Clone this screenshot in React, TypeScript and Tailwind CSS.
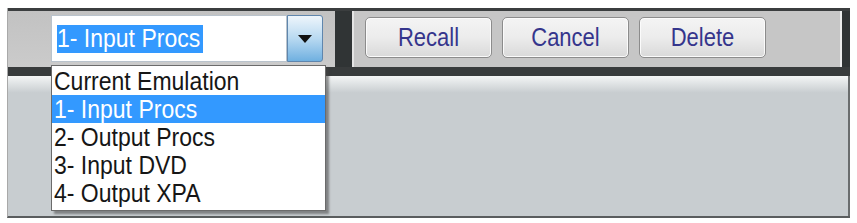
import React from 'react'

const font = { fontFamily: '"Liberation Sans", Arial, sans-serif' }

const items = ['Current Emulation', '1- Input Procs', '2- Output Procs', '3- Input DVD', '4- Output XPA']

const Txt = ({ children }: { children: React.ReactNode }) => (
  <span className="inline-block scale-y-[1.14] origin-center">{children}</span>
)

const ActionButton = ({ label }: { label: string }) => (
  <div className="w-[127px] h-[41px] rounded-[5px] border border-[#8c8c8c] bg-gradient-to-b from-[#f4f4f4] via-[#ececec] to-[#d9d9d9] shadow-[inset_0_0_0_1px_#fbfbfb] flex items-center justify-center text-[22px] text-[#35358c]">
    <Txt>{label}</Txt>
  </div>
)

export default function App() {
  return (
    <div className="w-[857px] h-[223px] bg-white overflow-hidden pt-[8px] pl-[7px]" style={font}>
      <div className="relative w-[843px] h-[210px] flex flex-col border-l border-[#a9a9a9] border-b-2 border-b-[#5a5d5e]">
        {/* top toolbar */}
        <div className="flex h-[59px] border-t-[3px] border-[#3b3e3f]">
          <div className="w-[327px] bg-gradient-to-b from-[#c2c2c2] to-[#cbcbcb] flex items-start pt-[4px] pl-[43px]">
            <div className="flex h-[47px]">
              <div className="w-[236px] bg-white border border-[#b9c3cc] flex items-center pl-[5px]">
                <div className="bg-[#3399ff] text-white text-[23px] h-[28px] w-[146px] flex items-center leading-none">
                  <Txt>1- Input Procs</Txt>
                </div>
              </div>
              <div className="w-[36px] rounded-r-[3px] border border-[#5f86ad] bg-gradient-to-b from-[#eef5fb] via-[#b8d9f1] to-[#6fb0e0] flex items-center justify-center">
                <svg width="16" height="10" viewBox="0 0 16 10">
                  <path d="M1 1 L15 1 L8 9 Z" fill="#111" />
                </svg>
              </div>
            </div>
          </div>
          <div className="w-[17px] bg-[#303435]" />
          <div className="flex-1 bg-[#c6c6c6] border-l-[2px] border-[#e4e4e4] border-r-[2px] border-r-[#ececec] flex items-start pt-[6px] pl-[11px] gap-[10px]">
            <ActionButton label="Recall" />
            <ActionButton label="Cancel" />
            <ActionButton label="Delete" />
          </div>
          <div className="w-[8px] bg-[#303435]" />
        </div>
        <div className="h-[9px] bg-[#383b3c]" />
        <div className="flex-1 bg-gradient-to-b from-[#f4f6f6] via-[#c8cdd0] via-[12%] to-[#c8cdd0] border-r-2 border-[#6a6d6e]" />

        {/* open dropdown list */}
        <div className="absolute left-[43px] top-[57px] w-[275px] h-[146px] bg-white border border-[#6b6b6b] shadow-[3px_3px_2px_rgba(70,70,70,0.55)] flex flex-col text-[23px] text-[#161616] leading-none pt-[1px]">
          {items.map((it, i) => (
            <div
              key={i}
              className={`h-[28px] flex items-center pl-[2px] ${i === 1 ? 'bg-[#3399ff] text-white' : ''}`}
            >
              <Txt>{it}</Txt>
            </div>
          ))}
        </div>
      </div>
    </div>
  )
}
